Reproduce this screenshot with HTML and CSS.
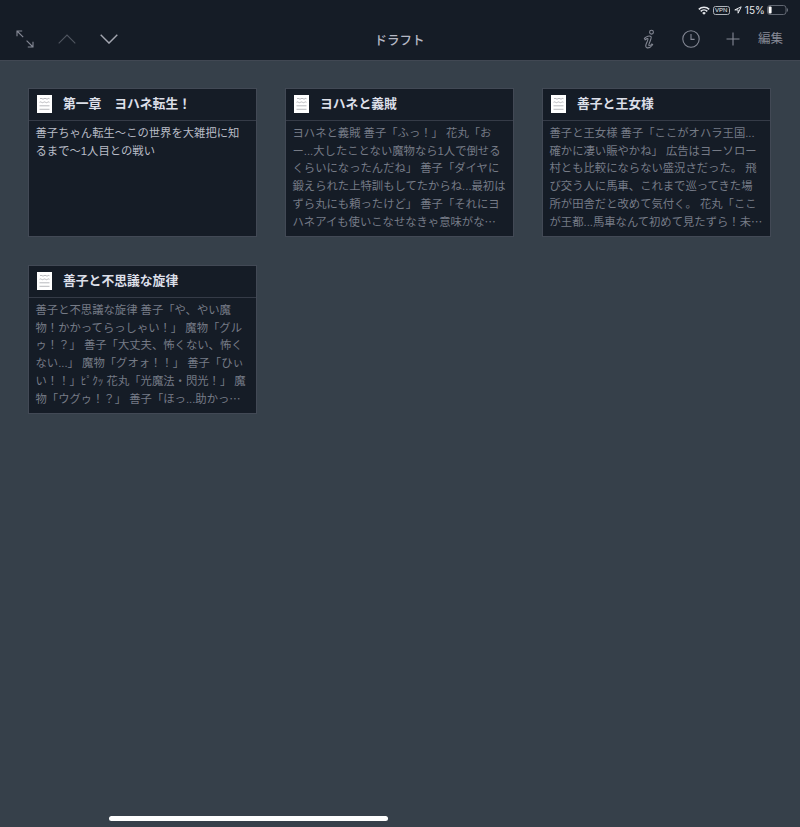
FILE: index.html
```
<!DOCTYPE html>
<html lang="ja">
	<head>
		<meta charset="utf-8" />
		<meta name="viewport" content="width=device-width, initial-scale=1.0" />
		<title>ドラフト</title>
		<link rel="stylesheet" href="styles.css">
	</head>
	<body>
		<header>
			<div class="status">
				<svg class="wifi" width="12" height="9" viewBox="0 0 12 9">
					<path d="M.8 3.4a7.4 7.4 0 0 1 10.4 0M2.7 5.4a4.7 4.7 0 0 1 6.6 0" fill="none" stroke="currentColor" stroke-width="1.5" />
					<path d="M4.2 6.9a2.5 2.5 0 0 1 3.6 0L6 8.8z" fill="currentColor" />
				</svg>
				<span class="vpn">VPN</span>
				<svg class="location" width="8" height="8" viewBox="0 0 8 8">
					<path d="M.8 3.9 7.2.8 4.1 7.2V3.9z" fill="none" stroke="currentColor" stroke-width="1" />
				</svg>
				<span class="percent">15%</span>
				<svg width="22" height="10" viewBox="0 0 22 10">
					<rect x=".5" y=".5" width="18.5" height="9" rx="2.5" fill="none" stroke="#626873" />
					<rect x="1.6" y="1.6" width="3" height="6.8" rx="1" fill="#fff" />
					<path d="M20.4 3.4v3.2" stroke="#626873" stroke-width="1.2" />
				</svg>
			</div>

			<nav class="toolbar">
				<div class="left-tools">
					<svg width="18" height="18" viewBox="0 0 18 18">
						<path d="M7.2 7.2 1 1M1 6.2V1h5.2M10.6 10.6 17 17M17 11.8V17h-5.2" />
					</svg>
					<svg class="disabled" width="18" height="10" viewBox="0 0 18 10">
						<path d="M.7 9.3 9 1l8.3 8.3" />
					</svg>
					<svg class="bright" width="18" height="10" viewBox="0 0 18 10">
						<path d="M.7.8 9 9.1 17.3.8" />
					</svg>
				</div>
				<h1>ドラフト</h1>
				<div class="right-tools">
					<svg class="info" width="12" height="20" viewBox="0 0 12 20">
						<circle cx="8.5" cy="3.2" r="1.9" />
						<path d="M1.4 9.4c1.8-2 5.2-3 6.6-1.8.8.7-.1 2.8-1.2 5.4-.9 2.2-1.4 3.4-.8 3.7.5.3 1.8-.6 2.8-1.7l.8.7c-1.6 2.2-4.1 3.5-5.8 3-1.8-.6-1-3 .1-5.4.9-2 1.5-3.3 1-3.6-.5-.2-1.7.3-2.7 1.1z" />
					</svg>
					<svg class="clock" width="18" height="18" viewBox="0 0 18 18">
						<circle cx="9" cy="9" r="8.2" />
						<path d="M9 4v5.4h3.6" />
					</svg>
					<svg class="plus" width="14" height="14" viewBox="0 0 14 14">
						<path d="M7 .5v13M.5 7h13" />
					</svg>
					<span class="edit">編集</span>
				</div>
			</nav>
		</header>

		<!-- shared icon for the cards -->
		<svg class="defs" width="0" height="0">
			<symbol id="doc" viewBox="0 0 15 18">
				<rect width="15" height="18" fill="#fff" />
				<path d="M3 3.7q1-.8 2 0t2 0 2 0 2 0 1.5 0M2.5 7.3q1-.8 2 0t2 0 2 0 2 0 2 0M2.5 10.8h10M2.5 14.3h10" fill="none" stroke="#a6a7ac" stroke-width=".8" />
			</symbol>
		</svg>

		<main>
			<article class="card active">
				<h2><svg width="15" height="18"><use href="#doc" /></svg>第一章　ヨハネ転生！</h2>
				<p>
					善子ちゃん転生〜この世界を大雑把に知<br />
					るまで〜1人目との戦い
				</p>
			</article>

			<article class="card">
				<h2><svg width="15" height="18"><use href="#doc" /></svg>ヨハネと義賊</h2>
				<p>
					ヨハネと義賊 善子「ふっ！」 花丸「お<br />
					ー...大したことない魔物なら1人で倒せる<br />
					くらいになったんだね」 善子「ダイヤに<br />
					鍛えられた上特訓もしてたからね...最初は<br />
					ずら丸にも頼ったけど」 善子「それにヨ<br />
					ハネアイも使いこなせなきゃ意味がな<span class="more">…</span>
				</p>
			</article>

			<article class="card">
				<h2><svg width="15" height="18"><use href="#doc" /></svg>善子と王女様</h2>
				<p>
					善子と王女様 善子「ここがオハラ王国...<br />
					確かに凄い賑やかね」 広告はヨーソロー<br />
					村とも比較にならない盛況さだった。 飛<br />
					び交う人に馬車、これまで巡ってきた場<br />
					所が田舎だと改めて気付く。 花丸「ここ<br />
					が王都...馬車なんて初めて見たずら！未<span class="more">…</span>
				</p>
			</article>

			<article class="card">
				<h2><svg width="15" height="18"><use href="#doc" /></svg>善子と不思議な旋律</h2>
				<p>
					善子と不思議な旋律 善子「や、やい魔<br />
					物！かかってらっしゃい！」 魔物「グル<br />
					ゥ！？」 善子「大丈夫、怖くない、怖く<br />
					ない...」 魔物「グオォ！！」 善子「ひぃ<br />
					い！！」ﾋﾟｸｯ 花丸「光魔法・閃光！」 魔<br />
					物「ウグゥ！？」 善子「ほっ...助かっ<span class="more">…</span>
				</p>
			</article>
		</main>

		<div class="home-bar"></div>
	</body>
</html>
```

FILE: styles.css
```
* {
	box-sizing: border-box;
}

body {
	margin: 0;
	height: 827px;
	display: flex;
	flex-direction: column;
	overflow: hidden;
	background-color: #36404a;
	font-family: "Liberation Sans", "Noto Sans CJK JP", sans-serif;
}

header {
	height: 61px;
	background-color: #151c26;
	border-bottom: 1px solid #414853;
	color: #858995;
}

svg {
	display: block;
	flex: none;
}

.defs {
	position: absolute;
}

.status {
	height: 19px;
	padding: 1px 11px 0 0;
	display: flex;
	justify-content: flex-end;
	align-items: center;
	color: #e6e8ec;
}

.vpn {
	width: 17px;
	height: 9px;
	margin: 0 4px 0 3px;
	border: 1px solid #aeb2b9;
	border-radius: 2.5px;
	font-size: 6px;
	line-height: 7px;
	text-align: center;
}

.percent {
	margin: 0 2px 0 3px;
	font-family: Inter, sans-serif;
	font-size: 10px;
	letter-spacing: 0.1px;
}

.toolbar {
	height: 40px;
	padding: 0 17px 0 16px;
	display: grid;
	grid-template-columns: 1fr auto 1fr;
	align-items: center;
}

.toolbar svg {
	fill: none;
	stroke: currentColor;
	stroke-width: 1.1;
}

.left-tools {
	display: flex;
	align-items: center;
	gap: 24px;
}

.left-tools .disabled {
	color: #505660;
}

.toolbar .bright {
	color: #a3a6b0;
	stroke-width: 1.4;
}

h1 {
	margin: 0;
	font-size: 12.5px;
	font-weight: 500;
	color: #b5b8c4;
}

.right-tools {
	display: flex;
	justify-content: flex-end;
	align-items: center;
}

.clock {
	margin: 0 26px 0 27px;
}

.edit {
	margin-left: 18px;
	font-size: 12.5px;
	line-height: 18px;
}

main {
	flex: 1;
	padding: 27px 29px 0 28px;
	display: grid;
	grid-template-columns: repeat(3, 229px);
	grid-auto-rows: 149px;
	gap: 28px;
	align-content: start;
}

.card {
	background-color: #151c26;
	border: 1px solid #424955;
	color: #767b86;
}

.card h2 {
	height: 32px;
	margin: 0;
	padding: 0 0 1px 7.5px;
	display: flex;
	align-items: center;
	gap: 11.5px;
	border-bottom: 1px solid #353b47;
	font-size: 12.8px;
	font-weight: bold;
	line-height: 18px;
	color: #dcdfe8;
}

.card p {
	margin: 4px 0 0;
	padding-left: 6.5px;
	font-size: 11.33px;
	line-height: 17.7px;
	white-space: nowrap;
}

.card.active p {
	color: #b9bdc7;
}

/* trailing ellipsis sits mid-height, keep it from stretching the last line */
.more {
	font-family: "Noto Sans CJK JP", sans-serif;
	line-height: 1;
}

.home-bar {
	width: 279px;
	height: 5px;
	margin: 0 0 6px 109px;
	border-radius: 3px;
	background-color: #fff;
}
```
